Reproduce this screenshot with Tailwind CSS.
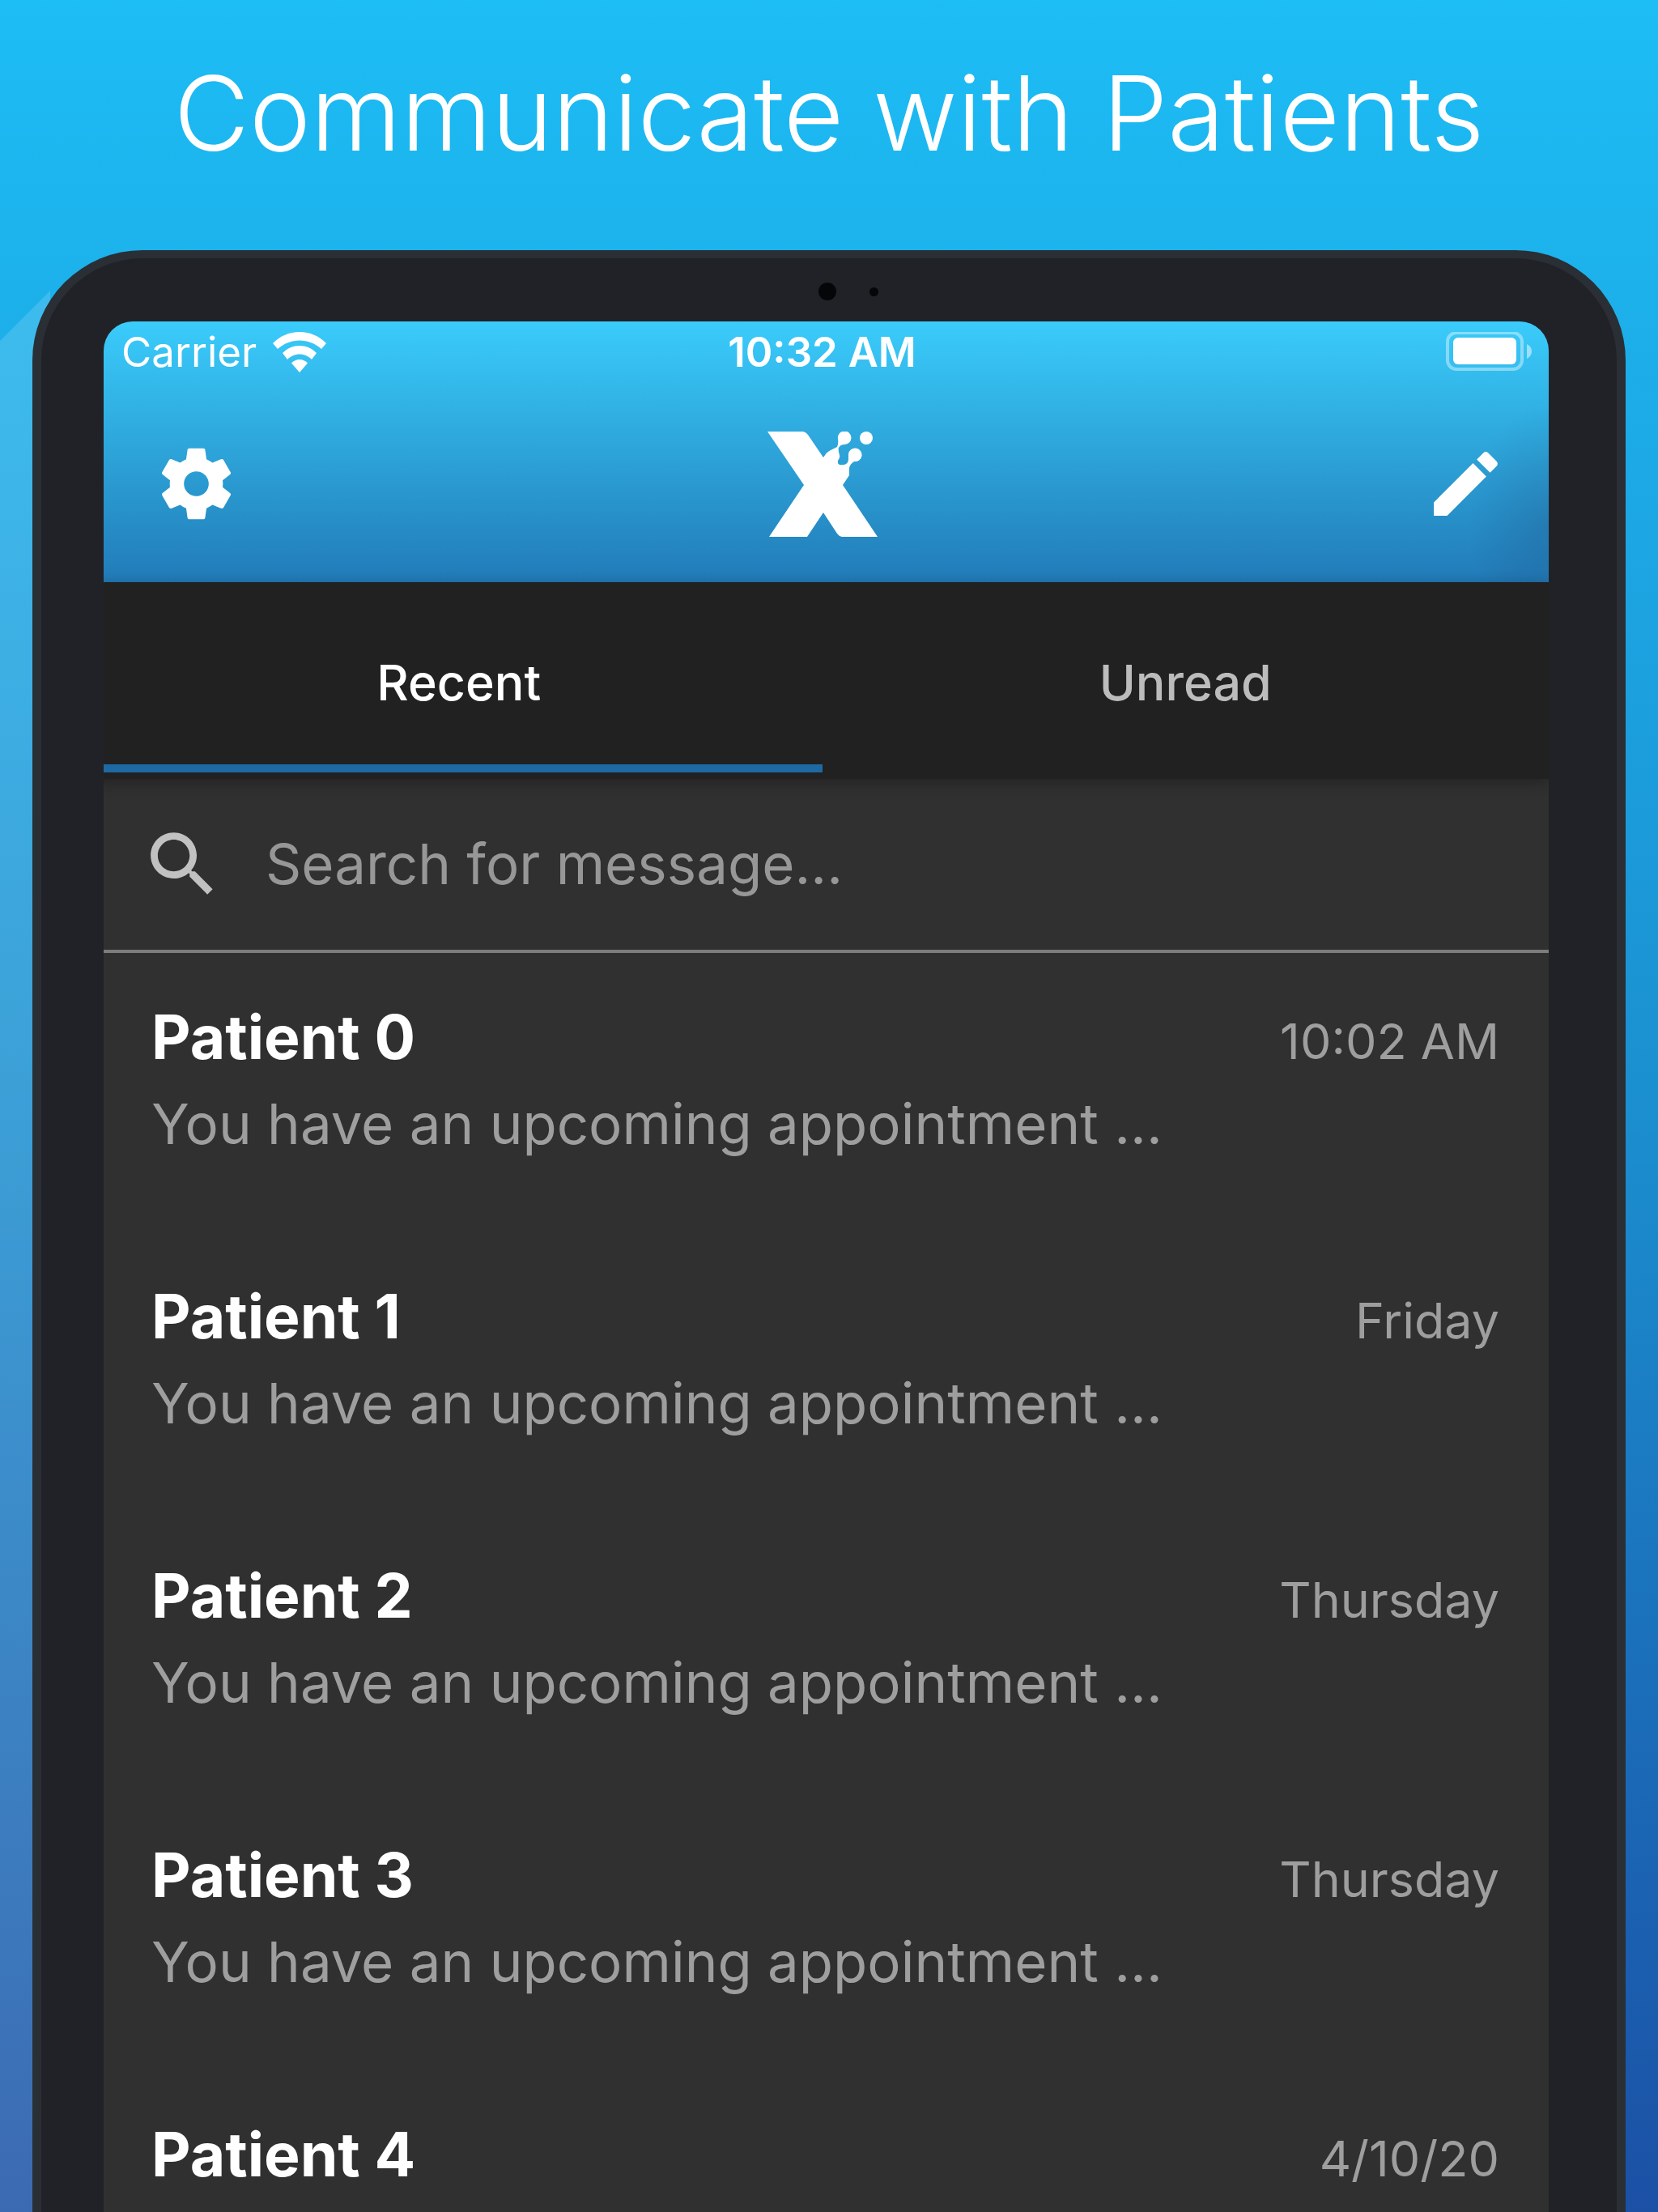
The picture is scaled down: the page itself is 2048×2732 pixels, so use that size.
<!DOCTYPE html>
<html lang="en">
	<head>
		<meta charset="UTF-8" />
		<meta name="viewport" content="width=device-width, initial-scale=1.0" />
		<title>Communicate with Patients</title>
		<script src="https://cdn.jsdelivr.net/npm/@tailwindcss/browser@4"></script>
	</head>
	<body
		class="relative h-screen flex flex-col overflow-hidden bg-linear-to-b from-[#1dbdf5] via-[#1b8fd0] to-[#1b50a5] font-['Inter',sans-serif]"
	>
		<!-- Light shade on the left side -->
		<div
			class="absolute inset-y-0 left-0 w-[62px] bg-white/15 [clip-path:polygon(0_421px,62px_359px,62px_100%,0_100%)]"
		></div>

		<h1
			class="relative h-[309px] shrink-0 pt-[50px] text-center text-[128px] leading-[180px] font-light text-white"
		>
			Communicate with Patients
		</h1>

		<!-- Tablet -->
		<div
			class="relative flex-1 min-h-0 mx-10 flex flex-col rounded-t-[136px] border-x-[11px] border-t-[10px] border-[#2a2f35] bg-[#212227] pl-[77px] pr-[84px]"
		>
			<!-- Camera and sensor -->
			<div class="h-[78px] shrink-0 flex items-center justify-center gap-[41px] pt-[4px] pl-[54px]">
				<span class="size-[22px] rounded-full bg-[#050608]"></span>
				<span class="size-[11px] rounded-full bg-[#050608]"></span>
			</div>

			<!-- Screen -->
			<main class="flex-1 min-h-0 overflow-hidden rounded-t-[36px] bg-[#303030]">
				<div class="-ml-[10px]">
					<header
						class="relative h-[322px] bg-linear-to-b from-[#3accfb] via-[#2da4d9] to-[#227bb8] text-white"
					>
						<div
							class="absolute right-0 bottom-0 w-[100px] h-[220px] bg-[radial-gradient(ellipse_100%_70%_at_100%_70%,rgba(30,70,120,0.25),transparent)]"
						></div>
						<div class="relative grid grid-cols-3 items-center h-[76px] px-[20px] text-[51px] leading-[60px]">
							<div class="flex items-center gap-[20px] pl-[12px]">
								<span>Carrier</span>
								<svg class="w-[66px] h-[50px]" viewBox="0 0 66 50" fill="currentColor">
									<path d="M33 0C20 0 9 5 0 14l6 7C14 14 23 10.500 33 10.500S52 14 60 21l6-7C57 5 46 0 33 0z" />
									<path d="M33 17c-8 0-15 3-21 9l6 8c4-4 9-6.500 15-6.500S44 30 48 34l6-8c-6-6-13-9-21-9z" />
									<path d="M33 34c-4 0-7 1.500-10 4.500L33 50l10-11.500C40 35.500 37 34 33 34z" />
								</svg>
							</div>
							<div class="text-center font-semibold">10:32 AM</div>
							<svg class="w-[107px] h-[50px] justify-self-end" viewBox="0 0 107 50" fill="none">
								<rect x="2" y="1" width="92" height="45" rx="11" stroke="white" stroke-opacity=".4" stroke-width="4" />
								<rect x="9" y="7" width="78" height="33" rx="6" fill="white" />
								<path d="M100 15c4 2 6 5 6 9s-2 7-6 9z" fill="white" fill-opacity=".5" />
							</svg>
						</div>

						<div class="relative grid grid-cols-3 items-center h-[246px] px-[50px] pt-[3px]">
							<button type="button" aria-label="Settings" class="justify-self-start pl-[22px]">
								<svg class="size-[105px]" viewBox="0 0 24 24" fill="currentColor">
									<path d="M19.430 12.980c.04-.32.07-.64.07-.98s-.03-.66-.07-.98l2.110-1.650c.19-.15.24-.42.12-.64l-2-3.460c-.12-.22-.39-.3-.61-.22l-2.490 1c-.52-.4-1.080-.73-1.690-.98l-.38-2.650C14.460 2.180 14.250 2 14 2h-4c-.25 0-.46.18-.49.42l-.38 2.650c-.61.25-1.170.59-1.690.98l-2.490-1c-.23-.09-.49 0-.61.22l-2 3.460c-.13.22-.07.49.12.64l2.110 1.650c-.04.32-.07.65-.07.98s.03.66.07.98l-2.110 1.650c-.19.15-.24.42-.12.64l2 3.460c.12.22.39.3.61.22l2.490-1c.52.4 1.080.73 1.690.98l.38 2.650c.03.24.24.42.49.42h4c.25 0 .46-.18.49-.42l.38-2.650c.61-.25 1.170-.59 1.690-.98l2.490 1c.23.09.49 0 .61-.22l2-3.460c.12-.22.07-.49-.12-.64l-2.110-1.650zM12 15.500c-1.930 0-3.500-1.570-3.500-3.500s1.570-3.500 3.500-3.500 3.500 1.570 3.500 3.500-1.570 3.500-3.500 3.500z" />
								</svg>
							</button>
							<svg class="w-[136px] h-[130px] justify-self-center" viewBox="0 0 136 130" fill="currentColor">
								<path d="M0 0h44q4 1 6 4l19 28q5-8 11-10l6-3q2-4 1-10A8.300 8.300 0 1 1 95 16q-5 0-7 4-1 3 1 9 1 3-2 7-1 6 6 5 6 0 7-6V28A8.300 8.300 0 1 1 107 37q-5 3-6 8v9l-8 12 43 64H92q-4-1-6-4L69 100l-20 30H2l43-64z" />
								<circle cx="122" cy="8" r="8" />
							</svg>
							<button type="button" aria-label="New message" class="justify-self-end">
								<svg class="size-[105px]" viewBox="0 0 24 24" fill="currentColor">
									<path d="M3 17.250V21h3.750L17.810 9.940l-3.750-3.750L3 17.250zM20.710 7.040c.39-.39.39-1.020 0-1.410l-2.340-2.340c-.39-.39-1.020-.39-1.410 0l-1.830 1.830 3.750 3.750 1.830-1.830z" />
								</svg>
							</button>
						</div>
					</header>

					<nav class="relative grid grid-cols-2 h-[243px] bg-[#212121] pb-[8px] text-[61px] font-medium shadow-[0_4px_16px_rgba(0,0,0,0.3)]">
						<button type="button" class="border-b-[10px] border-[#1f69a3] pt-[32px] pb-[8px] text-white">Recent</button>
						<button type="button" class="border-b-[10px] border-transparent pt-[32px] pb-[8px] text-[#bcbcbc]">Unread</button>
					</nav>

					<label class="flex items-center h-[215px] border-b-4 border-[#7d7d7d] pl-[55px]">
						<svg class="size-[105px] shrink-0 text-[#c1c1c1]" viewBox="0 0 24 24" fill="currentColor">
							<path d="M15.500 14h-.79l-.28-.27C15.410 12.590 16 11.110 16 9.500 16 5.910 13.090 3 9.500 3S3 5.910 3 9.500 5.910 16 9.500 16c1.610 0 3.090-.59 4.230-1.570l.27.28v.79l5 4.990L20.490 19l-4.990-5zm-6 0C7.010 14 5 11.990 5 9.500S7.010 5 9.500 5 14 7.010 14 9.500 11.990 14 9.500 14z" />
						</svg>
						<input
							type="text"
							aria-label="Search for message"
							placeholder="Search for message..."
							class="w-full ml-[50px] text-[69px] text-white placeholder:text-[#979797] outline-none"
						/>
					</label>

					<ul class="pl-[69px] pr-[61px]">
						<li class="h-[345px] pt-[59px]">
							<div class="flex items-baseline justify-between leading-[90px]">
								<h2 class="text-[75px] font-bold text-white">Patient 0</h2>
								<time class="text-[61px] text-[#9e9e9e]">10:02 AM</time>
							</div>
							<p class="mt-[12px] text-[69px] leading-[90px] text-[#9e9e9e]">You have an upcoming appointment ...</p>
						</li>
						<li class="h-[345px] pt-[59px]">
							<div class="flex items-baseline justify-between leading-[90px]">
								<h2 class="text-[75px] font-bold text-white">Patient 1</h2>
								<time class="text-[61px] text-[#9e9e9e]">Friday</time>
							</div>
							<p class="mt-[12px] text-[69px] leading-[90px] text-[#9e9e9e]">You have an upcoming appointment ...</p>
						</li>
						<li class="h-[345px] pt-[59px]">
							<div class="flex items-baseline justify-between leading-[90px]">
								<h2 class="text-[75px] font-bold text-white">Patient 2</h2>
								<time class="text-[61px] text-[#9e9e9e]">Thursday</time>
							</div>
							<p class="mt-[12px] text-[69px] leading-[90px] text-[#9e9e9e]">You have an upcoming appointment ...</p>
						</li>
						<li class="h-[345px] pt-[59px]">
							<div class="flex items-baseline justify-between leading-[90px]">
								<h2 class="text-[75px] font-bold text-white">Patient 3</h2>
								<time class="text-[61px] text-[#9e9e9e]">Thursday</time>
							</div>
							<p class="mt-[12px] text-[69px] leading-[90px] text-[#9e9e9e]">You have an upcoming appointment ...</p>
						</li>
						<li class="pt-[59px]">
							<div class="flex items-baseline justify-between leading-[90px]">
								<h2 class="text-[75px] font-bold text-white">Patient 4</h2>
								<time class="text-[61px] text-[#9e9e9e]">4/10/20</time>
							</div>
						</li>
					</ul>
				</div>
			</main>
		</div>
	</body>
</html>
